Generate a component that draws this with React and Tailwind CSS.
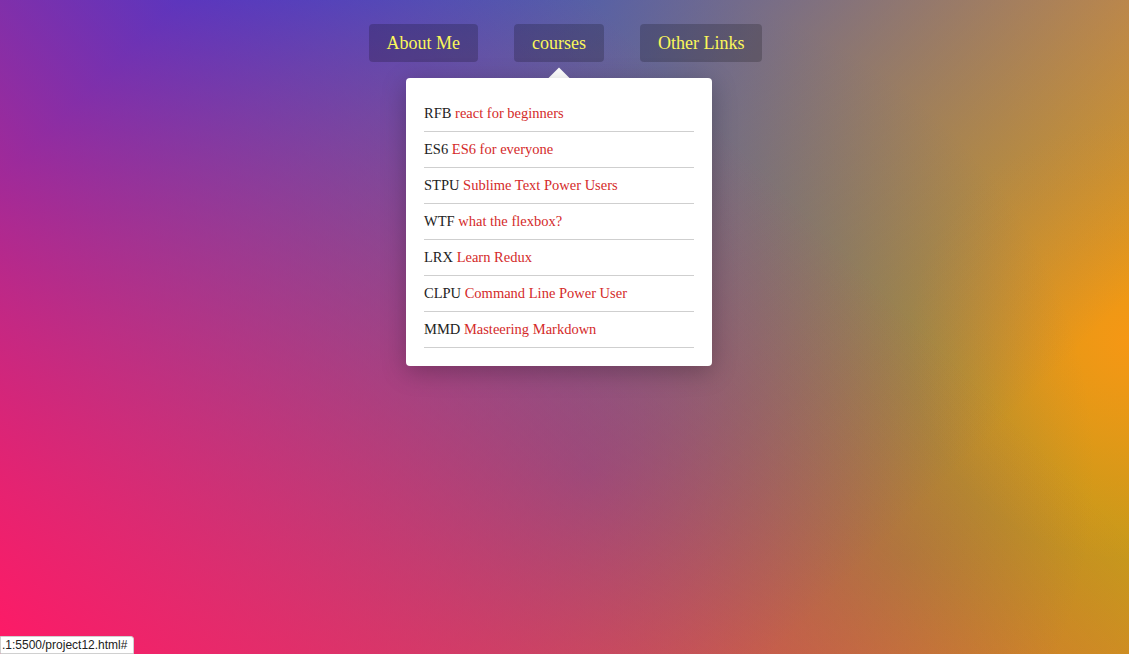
import React from "react";

const courses = [
  ["RFB", "react for beginners"],
  ["ES6", "ES6 for everyone"],
  ["STPU", "Sublime Text Power Users"],
  ["WTF", "what the flexbox?"],
  ["LRX", "Learn Redux"],
  ["CLPU", "Command Line Power User"],
  ["MMD", "Masteering Markdown"],
];

function NavButton({ children }) {
  return (
    <a
      href="#"
      className="block rounded-[4px] bg-black/20 px-[18px] h-[38px] leading-[38px] text-[18px] text-[#fbf75a]"
    >
      {children}
    </a>
  );
}

function App() {
  return (
    <div
      className="relative min-h-[654px] w-full overflow-hidden font-['Liberation_Serif',serif] bg-[#f29c1a] bg-[image:linear-gradient(45deg,hsla(340,100%,55%,1)_0%,hsla(340,100%,55%,0)_70%),linear-gradient(135deg,hsla(225,90%,48%,1)_10%,hsla(225,90%,48%,0)_80%),radial-gradient(ellipse_45%_75%_at_52%_72%,hsla(225,70%,42%,0.42)_0%,hsla(225,70%,42%,0)_100%),radial-gradient(circle_220px_at_100%_52%,hsla(35,92%,52%,1)_0%,hsla(35,92%,52%,0)_100%),radial-gradient(ellipse_70%_90%_at_80%_85%,hsla(90,65%,35%,0.4)_0%,hsla(90,65%,35%,0)_100%)]"
    >
      <nav className="flex justify-center pt-6 pl-[2px]">
        <ul className="flex gap-9">
          <li>
            <NavButton>About Me</NavButton>
          </li>
          <li className="relative">
            <NavButton>courses</NavButton>
            {/* dropdown */}
            <div className="absolute left-1/2 top-[54px] -translate-x-1/2 w-[306px]">
              <div className="absolute left-1/2 -top-[7px] h-[17px] w-[17px] -translate-x-1/2 rotate-45 bg-white"></div>
              <div className="relative rounded-[4px] bg-white p-[18px] shadow-[0_6px_24px_rgba(0,0,0,0.25)]">
                <ul>
                  {courses.map(([code, name]) => (
                    <li
                      key={code}
                      className="flex h-9 items-center border-b border-[#cfcfcf] text-[14.5px] text-[#222]"
                    >
                      {code}&nbsp;<span className="text-[#d42a2a]">{name}</span>
                    </li>
                  ))}
                </ul>
              </div>
            </div>
          </li>
          <li>
            <NavButton>Other Links</NavButton>
          </li>
        </ul>
      </nav>

      <div className="absolute bottom-0 left-0 h-[18px] rounded-tr-[3px] border border-[#d0d0d0] bg-white pl-[1px] pr-[6px] text-[12px] leading-[16px] text-[#222] font-['Liberation_Sans',sans-serif]">
        .1:5500/project12.html#
      </div>
    </div>
  );
}

export default App;
